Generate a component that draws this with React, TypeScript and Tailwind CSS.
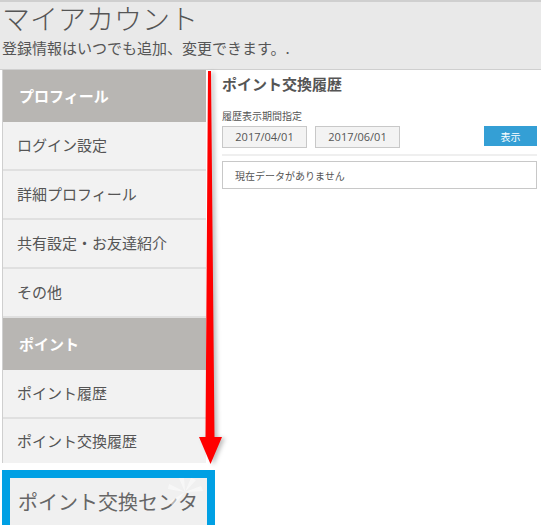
import React from "react";

const font = { fontFamily: '"Noto Sans CJK JP", "Noto Sans", sans-serif' };

function Item({ label }: { label: string }) {
  return (
    <div className="h-[49px] flex items-center pl-[14px] bg-[#f2f2f2] border-b-2 border-[#e0e0e0] text-[15px] text-[#555]">
      {label}
    </div>
  );
}

function Head({ label }: { label: string }) {
  return (
    <div className="h-[52px] flex items-center pl-[16px] bg-[#b8b6b3] text-white font-bold text-[15px]">
      {label}
    </div>
  );
}

export default function App() {
  return (
    <div className="relative w-[541px] h-[525px] overflow-hidden bg-white" style={font}>
      <div className="h-[70px] bg-[#e9e9e9] border-t-2 border-b border-[#cfcfcf] pl-[2px]">
        <div className="text-[28px] leading-[32px] text-[#555] font-light whitespace-nowrap">マイアカウント</div>
        <div className="text-[15px] leading-[20px] mt-[4px] text-[#555]">登録情報はいつでも追加、変更できます。.</div>
      </div>
      <div className="flex">
        <div className="w-[213px] ml-[2px] shrink-0">
          <div className="w-[204px] border-l border-[#cfcfcf]">
            <Head label="プロフィール" />
            <Item label="ログイン設定" />
            <Item label="詳細プロフィール" />
            <Item label="共有設定・お友達紹介" />
            <Item label="その他" />
            <Head label="ポイント" />
            <Item label="ポイント履歴" />
            <div className="h-[44px] flex items-center pl-[14px] bg-[#f2f2f2] text-[15px] text-[#555]">
              ポイント交換履歴
            </div>
          </div>
          <div className="mt-[7px] bg-[#00a0e4] p-[8px] pb-0 h-[60px]">
            <div className="relative h-full bg-[#f0f0f0] flex items-center pl-[8px] overflow-hidden">
              <span className="text-[20px] text-[#666] leading-none -mt-[4px]">ポイント交換センタ</span>
              <svg className="absolute right-[2px] top-0" width="40" height="30" viewBox="0 0 40 30">
                <g fill="#ffffff" opacity="0.5">
                  <polygon points="20,14 14,0 19,0" />
                  <polygon points="20,14 26,0 31,2" />
                  <polygon points="20,14 36,8 38,13" />
                  <polygon points="20,14 4,6 3,11" />
                  <polygon points="20,14 8,28 4,24" />
                </g>
              </svg>
            </div>
          </div>
        </div>
        <div className="flex-1 pl-[7px] pr-[4px] pt-[4px] text-[#555]">
          <div className="font-bold text-[15px] leading-[20px]">ポイント交換履歴</div>
          <div className="text-[10px] leading-[14px] mt-[15px]">履歴表示期間指定</div>
          <div className="flex items-start mt-[3px]">
            <div className="w-[85px] h-[22px] bg-[#f3f3f3] border border-[#c8c8c8] flex items-center justify-center text-[11px]" style={{ fontFamily: '"Open Sans", "Noto Sans", sans-serif' }}>2017/04/01</div>
            <div className="ml-[8px] w-[85px] h-[22px] bg-[#f3f3f3] border border-[#c8c8c8] flex items-center justify-center text-[11px]" style={{ fontFamily: '"Open Sans", "Noto Sans", sans-serif' }}>2017/06/01</div>
            <div className="ml-auto w-[53px] h-[20px] bg-[#349fd5] text-white text-[10px] flex items-center justify-center">表示</div>
          </div>
          <div className="mt-[6px] h-[2px] bg-[#efefef]" />
          <div className="mt-[5px] h-[28px] border border-[#c8c8c8] flex items-center pl-[12px] text-[10px]">
            現在データがありません
          </div>
        </div>
      </div>
      <svg
        className="absolute left-0 top-0 pointer-events-none"
        width="541"
        height="525"
        style={{ filter: "drop-shadow(3px 1px 2px rgba(0,0,0,0.25))" }}
      >
        <polygon points="208,71 211,71 214.5,437 222,437 210.5,464 199,437 205.5,437" fill="#ff0000" />
      </svg>
    </div>
  );
}
